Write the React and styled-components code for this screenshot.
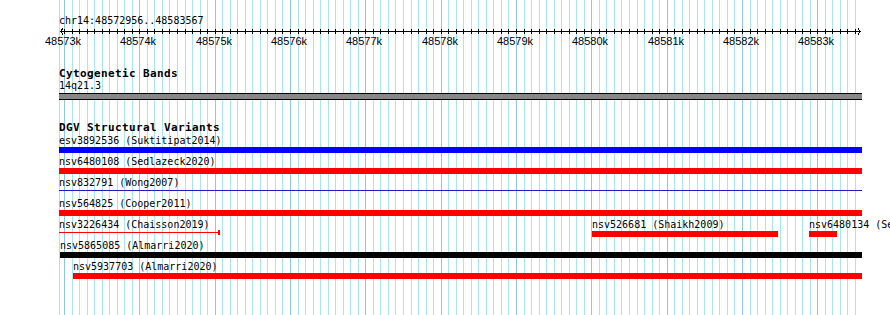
import React from 'react';
import styled, { createGlobalStyle } from 'styled-components';

const VIEW_START = 59;
const VIEW_END = 862;
const TRACK_W = VIEW_END - VIEW_START;
const BP_ORIGIN = 48573000;
const PX_ORIGIN = 64;
const PX_PER_BP = 0.07533;

// x inside the track area for a base position
const bpToX = bp => PX_ORIGIN + (bp - BP_ORIGIN) * PX_PER_BP - VIEW_START;

const gridKs = [];
for (let k = -1; k <= 107; k++) {
    const x = Math.round(bpToX(BP_ORIGIN + k * 100));
    if (x > 0 && x < TRACK_W) gridKs.push({ k, x });
}

const majors = gridKs.filter(g => g.k % 10 === 0);

const dgvRows = [
    [{ name: 'esv3892536 (Suktitipat2014)', x0: 59, x1: 862, color: '#0000ff' }],
    [{ name: 'nsv6480108 (Sedlazeck2020)', x0: 59, x1: 862, color: '#ff0000' }],
    [{ name: 'nsv832791 (Wong2007)', x0: 59, x1: 862, color: '#1f1fb0', thin: true }],
    [{ name: 'nsv564825 (Cooper2011)', x0: 59, x1: 862, color: '#ff0000' }],
    [
        { name: 'nsv3226434 (Chaisson2019)', x0: 59, x1: 218, color: '#ff0000', thin: true, cap: true },
        { name: 'nsv526681 (Shaikh2009)', x0: 592, x1: 778, color: '#ff0000' },
        { name: 'nsv6480134 (Sedlazeck2020)', x0: 809, x1: 837, color: '#ff0000' },
    ],
    [{ name: 'nsv5865085 (Almarri2020)', x0: 60, x1: 862, color: '#000000' }],
    [{ name: 'nsv5937703 (Almarri2020)', x0: 73, x1: 862, color: '#ff0000' }],
];

const App = () => {
    return (
        <>
            <GlobalStyle />
            <Page>
                <Gridlines>
                    <Gridline style={{ left: 0 }} />
                    {gridKs.map(g => (
                        <Gridline key={g.k} $major={g.k % 10 === 0} style={{ left: g.x }} />
                    ))}
                </Gridlines>

                <Tracks>
                    <RulerTrack>
                        <Location>chr14:48572956..48583567</Location>
                        <RulerSvg width={TRACK_W} height="8" shapeRendering="crispEdges">
                            <line x1="1" y1="4.5" x2="802" y2="4.5" stroke="#000" />
                            <polyline points="4,1.5 1.5,4.5 4,7.5" fill="none" stroke="#000" />
                            <polyline points="799,1.5 801.5,4.5 799,7.5" fill="none" stroke="#000" />
                            {gridKs.map(g => (
                                <line key={g.k} x1={g.x + 0.5} y1="2" x2={g.x + 0.5} y2="7" stroke="#000" />
                            ))}
                        </RulerSvg>
                        <TickLabels>
                            {majors.map(g => (
                                <TickLabel key={g.k} style={{ left: g.x - 1 }}>
                                    {48573 + g.k / 10}k
                                </TickLabel>
                            ))}
                        </TickLabels>
                    </RulerTrack>

                    <Track $top={17}>
                        <TrackTitle>Cytogenetic Bands</TrackTitle>
                        <BandName>14q21.3</BandName>
                        <BandBar />
                    </Track>

                    <Track $top={21}>
                        <TrackTitle>DGV Structural Variants</TrackTitle>
                        <Lanes>
                            {dgvRows.map((row, i) => (
                                <Lane key={i}>
                                    {row.map(f => (
                                        <Feature key={f.name} style={{ left: f.x0 - VIEW_START, width: f.x1 - f.x0 }}>
                                            <FeatureLabel>{f.name}</FeatureLabel>
                                            {f.thin
                                                ? <ThinGlyph $color={f.color} />
                                                : <BarGlyph $color={f.color} />}
                                            {f.cap && <EndCap $color={f.color} />}
                                        </Feature>
                                    ))}
                                </Lane>
                            ))}
                        </Lanes>
                    </Track>
                </Tracks>
            </Page>
        </>
    )
}

export default App;

const GlobalStyle = createGlobalStyle`
  html, body {
    margin: 0;
    padding: 0;
    background: #fff;
  }
  body {
    font-family: "DejaVu Sans Mono", "Liberation Mono", monospace;
    color: #000;
  }
`

const Page = styled.div`
  position: relative;
  width: 890px;
  height: 315px;
  overflow: hidden;
  background: #fff;
`

const Gridlines = styled.div`
  position: absolute;
  top: 0;
  bottom: 0;
  left: ${VIEW_START}px;
  width: ${TRACK_W}px;
`

const Gridline = styled.div`
  position: absolute;
  top: 0;
  bottom: 0;
  width: 1px;
  background: ${p => (p.$major ? '#8cc6ea' : '#a8e6ef')};
`

const Tracks = styled.div`
  position: relative;
  z-index: 1;
  display: flex;
  flex-direction: column;
  padding-left: ${VIEW_START}px;
`

const RulerTrack = styled.div`
  display: flex;
  flex-direction: column;
  height: 50px;
  width: ${TRACK_W}px;
  padding-top: 15px;
  box-sizing: border-box;
`

const Location = styled.div`
  font-size: 10px;
  line-height: 12px;
  white-space: nowrap;
`

const RulerSvg = styled.svg`
  display: block;
`

const TickLabels = styled.div`
  position: relative;
  height: 12px;
`

const TickLabel = styled.span`
  position: absolute;
  top: 0;
  transform: translateX(-50%);
  font-family: "Liberation Sans", Arial, sans-serif;
  font-size: 11px;
  line-height: 12px;
  white-space: nowrap;
`

const Track = styled.div`
  display: flex;
  flex-direction: column;
  margin-top: ${p => p.$top}px;
  width: ${TRACK_W}px;
`

const TrackTitle = styled.div`
  font-size: 11px;
  font-weight: bold;
  letter-spacing: 0.38px;
  line-height: 13px;
  white-space: nowrap;
`

const BandName = styled.div`
  font-size: 10px;
  line-height: 12px;
  margin-bottom: 1px;
`

const BandBar = styled.div`
  height: 5px;
  border-top: 1px solid #000;
  border-bottom: 1px solid #000;
  background: #878787;
`

const Lanes = styled.div`
  display: flex;
  flex-direction: column;
  padding-top: 2px;
`

const Lane = styled.div`
  position: relative;
  height: 21px;
`

const Feature = styled.div`
  position: absolute;
  top: 0;
  display: flex;
  flex-direction: column;
  height: 21px;
`

const FeatureLabel = styled.div`
  font-size: 10px;
  line-height: 10px;
  white-space: nowrap;
`

const BarGlyph = styled.div`
  margin-top: 1px;
  height: 6px;
  background: ${p => p.$color};
`

const ThinGlyph = styled.div`
  margin-top: 2px;
  height: 1px;
  background: ${p => p.$color};
`

const EndCap = styled.div`
  position: absolute;
  right: -2px;
  top: 10px;
  width: 2px;
  height: 5px;
  background: ${p => p.$color};
`
